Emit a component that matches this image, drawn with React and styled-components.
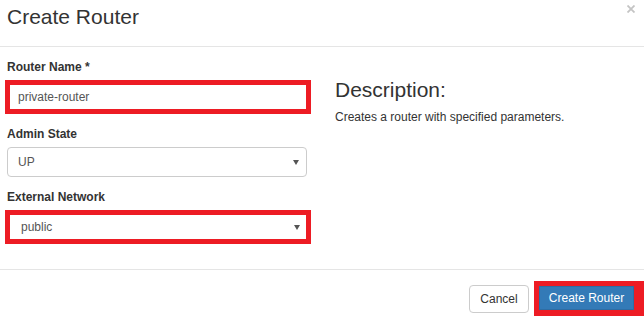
import React from "react";
import styled, { createGlobalStyle } from "styled-components";

const Global = createGlobalStyle`
  html, body { margin: 0; padding: 0; background: #fff; }
  body { font-family: "Liberation Sans", Arial, sans-serif; color: #333; }
  * { box-sizing: border-box; }
`;

const Modal = styled.div`
  width: 644px;
  height: 321px;
  background: #fff;
  display: flex;
  flex-direction: column;
  overflow: hidden;
`;

const Header = styled.div`
  height: 47px;
  border-bottom: 1px solid #e5e5e5;
  display: flex;
  justify-content: space-between;
  align-items: flex-start;
  padding: 5px 9px 0 7px;
`;

const Title = styled.h4`
  margin: 0;
  font-size: 21px;
  line-height: 23px;
  font-weight: 400;
  color: #333;
`;

const Close = styled.button`
  border: 0;
  background: none;
  padding: 0;
  margin-top: 0;
  width: 8px;
  height: 8px;
  display: flex;
  cursor: pointer;
`;

const Body = styled.div`
  height: 222px;
  display: flex;
  padding: 12px 0 0 7px;
`;

const FormCol = styled.div`
  width: 300px;
  display: flex;
  flex-direction: column;
  gap: 12px;
`;

const Group = styled.div`
  display: flex;
  flex-direction: column;
`;

const Label = styled.label`
  font-size: 12px;
  line-height: 17px;
  font-weight: 700;
  color: #333;
  margin-bottom: 4px;
`;

const Field = styled.div`
  position: relative;
  display: flex;
  align-items: center;
  font-size: 12px;
  color: #555;
  background: #fff;
  ${({ $highlight, $pad }) =>
    $highlight
      ? `
    width: 306px;
    height: 34px;
    margin-left: -2px;
    border: 5px solid #ed1c24;
    padding-left: ${$pad}px;
  `
      : `
    width: 300px;
    height: 30px;
    border: 1px solid #ccc;
    border-radius: 4px;
    padding-left: ${$pad}px;
  `}
`;

const Caret = styled.span`
  position: absolute;
  right: ${({ $right }) => $right}px;
  top: 50%;
  margin-top: -2px;
  width: 0;
  height: 0;
  border-left: 3px solid transparent;
  border-right: 3px solid transparent;
  border-top: 5px solid #555;
`;

const DescCol = styled.div`
  margin-left: 28px;
  padding-top: 19px;
`;

const DescTitle = styled.h3`
  margin: 0 0 8px;
  font-size: 21px;
  line-height: 23px;
  font-weight: 400;
  color: #333;
`;

const DescText = styled.p`
  margin: 0;
  font-size: 12px;
  line-height: 17px;
  color: #333;
`;

const Footer = styled.div`
  border-top: 1px solid #e5e5e5;
  display: flex;
  justify-content: flex-end;
  align-items: center;
  padding-top: 11px;
  gap: 5px;
`;

const Button = styled.button`
  font-family: "Liberation Sans", Arial, sans-serif;
  font-size: 12px;
  line-height: 16px;
  border-radius: ${({ $primary }) => ($primary ? "0" : "4px")};
  border: 1px solid ${({ $primary }) => ($primary ? "#2e6da4" : "#ccc")};
  background: ${({ $primary }) => ($primary ? "#337ab7" : "#fff")};
  color: ${({ $primary }) => ($primary ? "#fff" : "#333")};
  width: ${({ $w }) => $w}px;
  height: ${({ $h }) => $h}px;
  padding: 0;
  display: flex;
  align-items: center;
  justify-content: center;
  cursor: pointer;
`;

const RedFrame = styled.div`
  border-style: solid;
  border-color: #ed1c24;
  border-width: 5px 10px 6px 5px;
  display: flex;
`;

export default function App() {
  return (
    <>
      <Global />
      <Modal>
        <Header>
          <Title>Create Router</Title>
          <Close aria-label="Close">
            <svg width="8" height="8" viewBox="0 0 8 8">
              <path d="M0.5 0.5 L7.5 7.5 M7.5 0.5 L0.5 7.5" stroke="#c4c4c4" strokeWidth="1.8" />
            </svg>
          </Close>
        </Header>
        <Body>
          <FormCol>
            <Group>
              <Label>Router Name *</Label>
              <Field $highlight $pad={8}>private-router</Field>
            </Group>
            <Group>
              <Label>Admin State</Label>
              <Field $pad={10}>
                UP
                <Caret $right={7} />
              </Field>
            </Group>
            <Group>
              <Label>External Network</Label>
              <Field $highlight $pad={11}>
                public
                <Caret $right={6} />
              </Field>
            </Group>
          </FormCol>
          <DescCol>
            <DescTitle>Description:</DescTitle>
            <DescText>Creates a router with specified parameters.</DescText>
          </DescCol>
        </Body>
        <Footer>
          <Button $w={60} $h={28}>Cancel</Button>
          <RedFrame>
            <Button $primary $w={95} $h={24}>Create Router</Button>
          </RedFrame>
        </Footer>
      </Modal>
    </>
  );
}
